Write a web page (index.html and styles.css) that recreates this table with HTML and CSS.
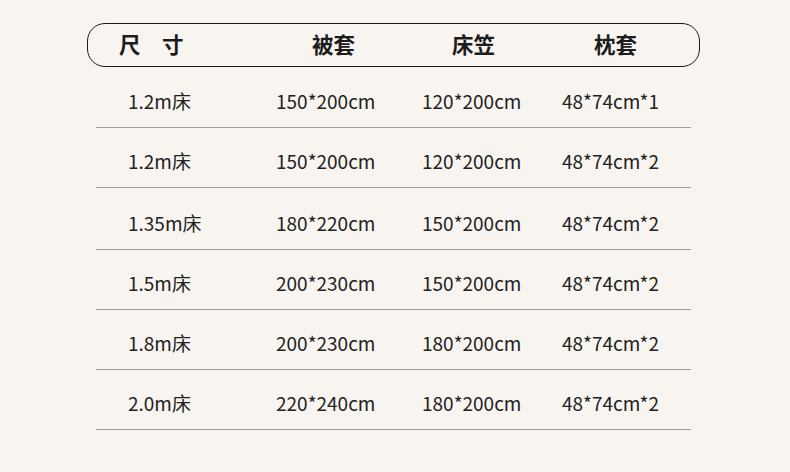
FILE: index.html
```html
<!DOCTYPE html>
<html lang="zh-CN">
<head>
<meta charset="utf-8">
<title>尺寸表</title>
<link rel="stylesheet" href="styles.css">
</head>
<body>
<div class="table">
  <div class="head">
    <div class="hc">尺　寸</div>
    <div class="hc">被套</div>
    <div class="hc">床笠</div>
    <div class="hc">枕套</div>
  </div>
  <div class="rows">
    <div class="row"><span>1.2m床</span><span>150*200cm</span><span>120*200cm</span><span>48*74cm*1</span></div>
    <div class="row"><span>1.2m床</span><span>150*200cm</span><span>120*200cm</span><span>48*74cm*2</span></div>
    <div class="row tall"><span>1.35m床</span><span>180*220cm</span><span>150*200cm</span><span>48*74cm*2</span></div>
    <div class="row"><span>1.5m床</span><span>200*230cm</span><span>150*200cm</span><span>48*74cm*2</span></div>
    <div class="row"><span>1.8m床</span><span>200*230cm</span><span>180*200cm</span><span>48*74cm*2</span></div>
    <div class="row"><span>2.0m床</span><span>220*240cm</span><span>180*200cm</span><span>48*74cm*2</span></div>
  </div>
</div>
</body>
</html>
```
FILE: styles.css
```css
html, body {
  margin: 0;
  padding: 0;
  background: #f8f5f0;
}
body {
  width: 790px;
  height: 472px;
  overflow: hidden;
  font-family: "Noto Sans CJK SC", "Noto Sans", sans-serif;
  color: #1c1c1c;
}
.table {
  margin: 23px 0 0 87px;
  width: 613px;
}
.head {
  box-sizing: border-box;
  height: 44px;
  border: 1px solid #1a1a1a;
  border-radius: 18px;
  display: grid;
  grid-template-columns: 193px 140px 142px 1fr;
  align-items: center;
  padding: 0 0 3px 31px;
  font-size: 21.5px;
  font-weight: 700;
  line-height: 24px;
}
.rows {
  margin: 0 9px;
}
.row {
  box-sizing: border-box;
  height: 60px;
  border-bottom: 1px solid #a59f99;
  display: grid;
  grid-template-columns: 148px 146px 140px 1fr;
  align-items: end;
  padding: 0 0 16px 32px;
  font-size: 19px;
  line-height: 20px;
  color: #222;
}
.row:first-child {
  height: 61px;
}
.row.tall {
  height: 62px;
}
```
